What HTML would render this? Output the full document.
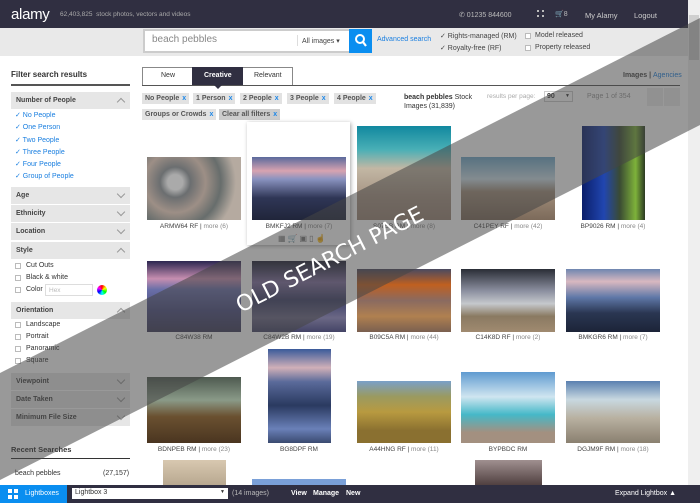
<!DOCTYPE html>
<html><head><meta charset="utf-8"><style>
*{margin:0;padding:0;box-sizing:border-box}
body{width:700px;height:503px;overflow:hidden;position:relative;background:#fff;font-family:"Liberation Sans",Arial,sans-serif;font-size:7px;color:#333}
.a{position:absolute;white-space:nowrap}
.hdr{left:0;top:0;width:688px;height:28px;background:#302f41}
.sb{left:0;top:28px;width:688px;height:28px;background:#e9e9e9}
.row{position:absolute;left:11px;width:119px;height:17px;background:#e6e6e6;font-weight:bold;font-size:7px;color:#444;padding:5px 0 0 5px}
.row i{position:absolute;right:6px;top:4px;width:6px;height:6px;border-right:1px solid #999;border-bottom:1px solid #999;transform:rotate(45deg)}
.row i.up{top:7px;transform:rotate(-135deg)}
.cb{position:absolute;width:6px;height:6px;border:1px solid #bbb;background:#fff}
.lk{color:#1a7fe0}
.chip{position:absolute;height:11px;background:#e2e2e2;font-size:7px;font-weight:bold;color:#555;padding:2px 3px 0 3px}
.chip b{color:#1a86e8;margin-left:3px}
.img{position:absolute}
.lbl{position:absolute;font-size:6.5px;color:#444;text-align:center;width:110px}
.lbl span{color:#888}
</style></head><body>
<div class="a hdr"></div>
<div class="a" style="left:11px;top:6px;font-size:15px;color:#fff;letter-spacing:-0.3px">alamy</div>
<div class="a" style="left:60px;top:11px;font-size:6.5px;color:#aaa">62,403,825 &nbsp;stock photos, vectors and videos</div>
<div class="a" style="left:459px;top:11px;font-size:7px;color:#bbb">&#9990; 01235 844600</div>
<div class="a" style="left:537px;top:10px;width:7px;height:7px;border:2px dotted #bbb"></div>
<div class="a" style="left:555px;top:10px;font-size:7px;color:#bbb">&#128722;8</div>
<div class="a" style="left:585px;top:11px;font-size:7.5px;color:#ccc">My Alamy</div>
<div class="a" style="left:634px;top:11px;font-size:7.5px;color:#ccc">Logout</div>
<div class="a" style="left:688px;top:0;width:12px;height:485px;background:#efefef"></div>
<div class="a" style="left:689px;top:15px;width:10px;height:45px;background:#cfcfcf"></div>
<div class="a sb"></div>
<div class="a" style="left:143px;top:29px;width:208px;height:24px;background:#fff;border:2px solid #ccc"></div>
<div class="a" style="left:152px;top:34px;font-size:10px;color:#888">beach pebbles</div>
<div class="a" style="left:297px;top:35px;width:1px;height:11px;background:#ddd"></div>
<div class="a" style="left:302px;top:37px;font-size:7px;color:#444">All images &#9662;</div>
<div class="a" style="left:349px;top:29px;width:23px;height:24px;background:#0a8ef0"></div>
<svg class="a" style="left:354px;top:33px" width="14" height="15"><circle cx="6" cy="6" r="4" stroke="#fff" stroke-width="2" fill="none"/><line x1="9" y1="9" x2="12" y2="13" stroke="#fff" stroke-width="2.2"/></svg>
<div class="a lk" style="left:377px;top:36px;font-size:7px">Advanced search</div>
<div class="a" style="left:440px;top:32px;font-size:7px;color:#444">&#10003; Rights-managed (RM)</div>
<div class="a" style="left:440px;top:44px;font-size:7px;color:#444">&#10003; Royalty-free (RF)</div>
<div class="cb" style="left:525px;top:33px"></div><div class="a" style="left:535px;top:32px;font-size:7px;color:#444">Model released</div>
<div class="cb" style="left:525px;top:45px"></div><div class="a" style="left:535px;top:44px;font-size:7px;color:#444">Property released</div>

<div class="a" style="left:11px;top:70px;font-size:8px;font-weight:bold;color:#333">Filter search results</div>
<div class="a" style="left:11px;top:84px;width:119px;height:2px;background:#555"></div>
<div class="row" style="top:92px">Number of People<i class="up"></i></div>
<div class="a lk" style="left:15px;top:111px">&#10003; No People</div>
<div class="a lk" style="left:15px;top:123px">&#10003; One Person</div>
<div class="a lk" style="left:15px;top:136px">&#10003; Two People</div>
<div class="a lk" style="left:15px;top:148px">&#10003; Three People</div>
<div class="a lk" style="left:15px;top:160px">&#10003; Four People</div>
<div class="a lk" style="left:15px;top:172px">&#10003; Group of People</div>
<div class="row" style="top:187px">Age<i></i></div>
<div class="row" style="top:205px">Ethnicity<i></i></div>
<div class="row" style="top:223px">Location<i></i></div>
<div class="row" style="top:242px">Style<i class="up"></i></div>
<div class="cb" style="left:15px;top:263px"></div><div class="a" style="left:26px;top:262px">Cut Outs</div>
<div class="cb" style="left:15px;top:275px"></div><div class="a" style="left:26px;top:274px">Black &amp; white</div>
<div class="cb" style="left:15px;top:287px"></div><div class="a" style="left:26px;top:286px">Color</div>
<div class="a" style="left:45px;top:284px;width:48px;height:12px;border:1px solid #ddd;font-size:6.5px;color:#bbb;padding:2px 3px">Hex</div>
<div class="a" style="left:97px;top:285px;width:10px;height:10px;border-radius:50%;background:conic-gradient(red,yellow,lime,cyan,blue,magenta,red)"></div>
<div class="row" style="top:302px">Orientation<i class="up"></i></div>
<div class="cb" style="left:15px;top:322px"></div><div class="a" style="left:26px;top:321px">Landscape</div>
<div class="cb" style="left:15px;top:334px"></div><div class="a" style="left:26px;top:333px">Portrait</div>
<div class="cb" style="left:15px;top:346px"></div><div class="a" style="left:26px;top:345px">Panoramic</div>
<div class="cb" style="left:15px;top:358px"></div><div class="a" style="left:26px;top:357px">Square</div>
<div class="row" style="top:373px">Viewpoint<i></i></div>
<div class="row" style="top:391px">Date Taken<i></i></div>
<div class="row" style="top:409px">Minimum File Size<i></i></div>
<div class="a" style="left:11px;top:445px;font-size:7.5px;font-weight:bold;color:#333">Recent Searches</div>
<div class="a" style="left:11px;top:458px;width:119px;height:1px;background:#333"></div>
<div class="a" style="left:15px;top:470px;font-size:7px">beach pebbles</div>
<div class="a" style="left:103px;top:470px;font-size:7px">(27,157)</div>

<div class="a" style="left:142px;top:67px;width:151px;height:19px;border:1px solid #888;border-bottom:none"></div>
<div class="a" style="left:161px;top:72px;font-size:7px">New</div>
<div class="a" style="left:192px;top:67px;width:51px;height:19px;background:#302f41"></div>
<div class="a" style="left:204px;top:72px;font-size:7px;color:#fff;font-weight:bold">Creative</div>
<div class="a" style="left:254px;top:72px;font-size:7px">Relevant</div>
<div class="a" style="left:142px;top:85px;width:538px;height:1px;background:#555"></div>
<div class="a" style="left:214px;top:85px;width:0;height:0;border-left:4px solid transparent;border-right:4px solid transparent;border-top:4px solid #302f41"></div>
<div class="a" style="left:623px;top:72px;font-size:7px;font-weight:bold;color:#444">Images | <span class="lk" style="font-weight:normal">Agencies</span></div>
<div class="chip" style="left:142px;top:93px">No People<b>x</b></div>
<div class="chip" style="left:193px;top:93px">1 Person<b>x</b></div>
<div class="chip" style="left:240px;top:93px">2 People<b>x</b></div>
<div class="chip" style="left:287px;top:93px">3 People<b>x</b></div>
<div class="chip" style="left:334px;top:93px">4 People<b>x</b></div>
<div class="chip" style="left:142px;top:109px">Groups or Crowds<b>x</b></div>
<div class="chip" style="left:219px;top:109px;background:#ccc">Clear all filters<b>x</b></div>
<div class="a" style="left:404px;top:94px;font-size:7px;line-height:8.5px"><b>beach pebbles</b> Stock<br>Images (31,839)</div>
<div class="a" style="left:487px;top:93px;font-size:6.5px;color:#aaa">results per page:</div>
<div class="a" style="left:544px;top:91px;width:29px;height:11px;border:1px solid #ccc;font-size:7px;font-weight:bold;padding:1px 2px">90 <span style="float:right;font-size:5px">&#9660;</span></div>
<div class="a" style="left:587px;top:93px;font-size:7px;color:#999">Page 1 of 354</div>
<div class="a" style="left:647px;top:88px;width:16px;height:18px;background:#eee"></div>
<div class="a" style="left:664px;top:88px;width:16px;height:18px;background:#eee"></div>

<div class="a" style="left:247px;top:122px;width:103px;height:123px;background:#fff;box-shadow:1px 1px 4px rgba(0,0,0,.35)"></div>
<div class="img" style="left:147px;top:157px;width:94px;height:63px;background:radial-gradient(circle at 30% 40%,#aaa 0 10%,#6b6e70 20%,#9d8f86 40%,#676d6c 60%,#b5aaa0 80%)"></div>
<div class="img" style="left:252px;top:157px;width:94px;height:63px;background:linear-gradient(#5a6a9c,#d8a3b0 22%,#8a93c0 35%,#2f3656 65%,#20253a)"></div>
<div class="img" style="left:357px;top:126px;width:94px;height:94px;background:linear-gradient(#11889f,#49afb6 25%,#c2b7a4 45%,#a79484 75%,#9a8575)"></div>
<div class="img" style="left:461px;top:157px;width:94px;height:63px;background:linear-gradient(#6fa7c9,#cfe1ea 35%,#a08d7a 55%,#7c6a5a)"></div>
<div class="img" style="left:582px;top:126px;width:63px;height:94px;background:linear-gradient(90deg,#0a1e6a,#2146b0 35%,#3a4b33 60%,#7eb23a 85%,#2b3a23)"></div>
<div class="lbl" style="left:139px;top:223px">ARMW64 RF | <span>more (6)</span></div>
<div class="lbl" style="left:244px;top:223px">BMKFJ2 RM | <span>more (7)</span></div>
<div class="lbl" style="left:349px;top:223px">S07BB RM | <span>more (8)</span></div>
<div class="lbl" style="left:453px;top:223px">C41PEY RF | <span>more (42)</span></div>
<div class="lbl" style="left:558px;top:223px">BP9026 RM | <span>more (4)</span></div>
<div class="a" style="left:278px;top:234px;font-size:8px;color:#777;letter-spacing:2px">&#9638;&#128722;&#9635;&#9647;&#9757;</div>

<div class="img" style="left:147px;top:261px;width:94px;height:71px;background:linear-gradient(#2b2650,#c68eb0 25%,#6a6fa8 40%,#4b4d80 70%,#3e3c5a)"></div>
<div class="img" style="left:252px;top:261px;width:94px;height:71px;background:linear-gradient(#1e2033,#7f6fa0 30%,#3d3f68 55%,#6b6885 80%,#444466)"></div>
<div class="img" style="left:357px;top:269px;width:94px;height:63px;background:linear-gradient(#4a4a60,#c06020 25%,#8a6a60 50%,#b08050 75%,#7a6050)"></div>
<div class="img" style="left:461px;top:269px;width:94px;height:63px;background:linear-gradient(#2a2d36,#8c90a0 35%,#c5c8cc 55%,#8a7a62 75%,#a08a70)"></div>
<div class="img" style="left:566px;top:269px;width:94px;height:63px;background:linear-gradient(#6f86b0,#d8b8c0 20%,#5f78a8 45%,#2a3652 70%,#1c2438)"></div>
<div class="lbl" style="left:139px;top:334px">C84W38 RM</div>
<div class="lbl" style="left:244px;top:334px">C84W2B RM | <span>more (19)</span></div>
<div class="lbl" style="left:349px;top:334px">B09C5A RM | <span>more (44)</span></div>
<div class="lbl" style="left:453px;top:334px">C14K8D RF | <span>more (2)</span></div>
<div class="lbl" style="left:558px;top:334px">BMKGR6 RM | <span>more (7)</span></div>

<div class="img" style="left:147px;top:377px;width:94px;height:66px;background:linear-gradient(#4e5a50,#8a9a88 35%,#6a5030 60%,#4a3520)"></div>
<div class="img" style="left:268px;top:349px;width:63px;height:94px;background:linear-gradient(#3a5a9a,#d0b0b8 20%,#5a6a9a 35%,#2a3a60 60%,#6a80b8 85%,#3a4a70)"></div>
<div class="img" style="left:357px;top:381px;width:94px;height:62px;background:linear-gradient(#7aa0c8,#9a9a60 25%,#b89a40 50%,#8a7030 80%)"></div>
<div class="img" style="left:461px;top:372px;width:94px;height:71px;background:linear-gradient(#5f9bd0,#cfe5f0 35%,#45b8c8 60%,#a39080 85%)"></div>
<div class="img" style="left:566px;top:381px;width:94px;height:62px;background:linear-gradient(#5a80b0,#c8d8e0 30%,#b8b0a0 60%,#8a8070)"></div>
<div class="lbl" style="left:139px;top:446px">BDNPEB RM | <span>more (23)</span></div>
<div class="lbl" style="left:244px;top:446px">BG8DPF RM</div>
<div class="lbl" style="left:349px;top:446px">A44HNG RF | <span>more (11)</span></div>
<div class="lbl" style="left:453px;top:446px">BYPBDC RM</div>
<div class="lbl" style="left:558px;top:446px">DGJM9F RM | <span>more (18)</span></div>
<div class="img" style="left:163px;top:460px;width:63px;height:25px;background:linear-gradient(#d8c8b0,#b8a890)"></div>
<div class="img" style="left:252px;top:479px;width:94px;height:6px;background:#7aa0d8"></div>
<div class="img" style="left:475px;top:460px;width:67px;height:25px;background:linear-gradient(#a09090,#504040)"></div>

<svg class="a" style="left:0;top:0" width="700" height="503"><polygon points="0,373 700,18 700,125 0,480" fill="rgba(70,70,70,0.55)"/><text x="0" y="0" transform="translate(333,266) rotate(-27)" text-anchor="middle" font-family="DejaVu Sans,sans-serif" font-size="22" fill="#fff">OLD SEARCH PAGE</text></svg>

<div class="a" style="left:0;top:485px;width:700px;height:18px;background:#302f41"></div>
<div class="a" style="left:0;top:485px;width:67px;height:18px;background:#0a8ef0"></div>
<div class="a" style="left:8px;top:489px;width:10px;height:10px;background:linear-gradient(#0a8ef0,#0a8ef0) 4px 0/2px 10px no-repeat,linear-gradient(#0a8ef0,#0a8ef0) 0 4px/10px 2px no-repeat,#fff"></div>
<div class="a" style="left:25px;top:490px;font-size:7px;color:#fff">Lightboxes</div>
<div class="a" style="left:72px;top:488px;width:156px;height:11px;background:#fff;font-size:7px;color:#333;padding:1px 3px">Lightbox 3<span style="float:right;font-size:5px">&#9660;</span></div>
<div class="a" style="left:232px;top:490px;font-size:7px;color:#bbb">(14 images)</div>
<div class="a" style="left:291px;top:490px;font-size:7px;color:#fff;font-weight:bold">View</div>
<div class="a" style="left:313px;top:490px;font-size:7px;color:#fff;font-weight:bold">Manage</div>
<div class="a" style="left:346px;top:490px;font-size:7px;color:#fff;font-weight:bold">New</div>
<div class="a" style="left:615px;top:490px;font-size:7px;color:#fff">Expand Lightbox &#9650;</div>
</body></html>
